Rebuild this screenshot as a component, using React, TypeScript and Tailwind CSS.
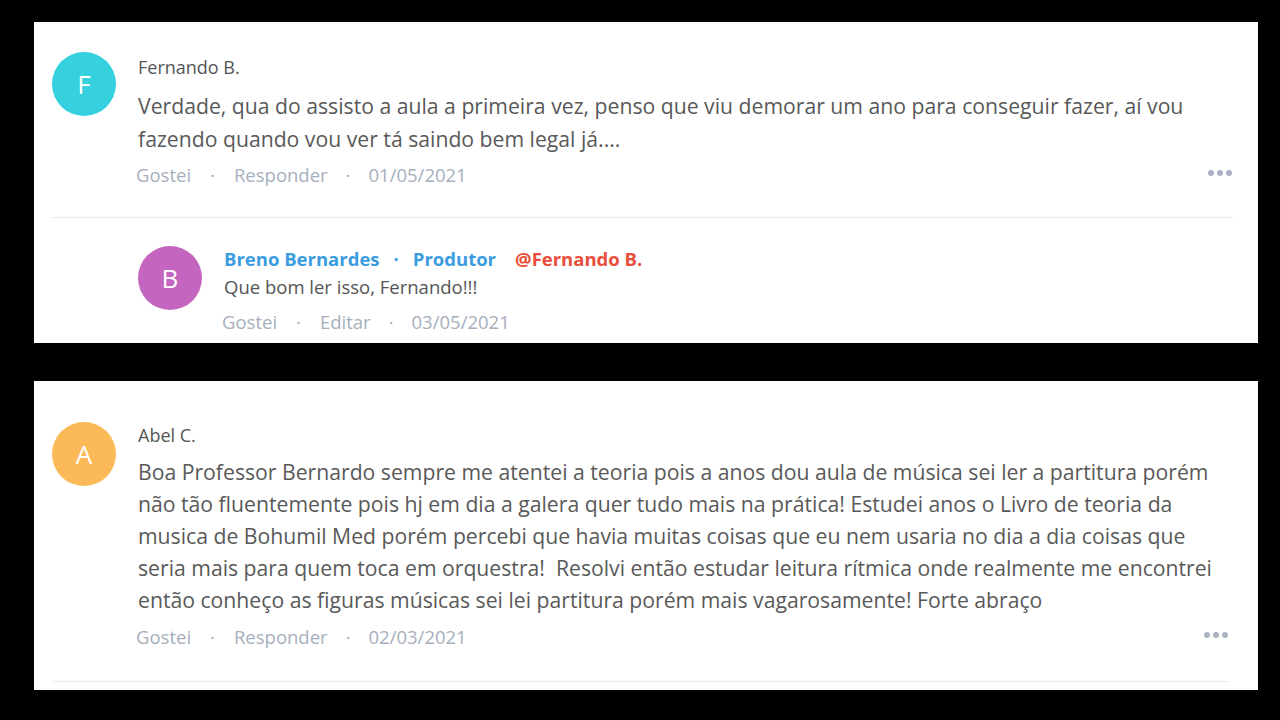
const font = { fontFamily: '"Open Sans", "Noto Sans", sans-serif' };

function Avatar({ letter, color }: { letter: string; color: string }) {
  return (
    <div
      className={`flex h-16 w-16 flex-shrink-0 items-center justify-center rounded-full text-[26px] text-white ${color}`}
    >
      {letter}
    </div>
  );
}

function Dots() {
  return (
    <div className="flex gap-[3px]">
      <span className="h-[6px] w-[6px] rounded-full bg-[#a9b2c0]" />
      <span className="h-[6px] w-[6px] rounded-full bg-[#a9b2c0]" />
      <span className="h-[6px] w-[6px] rounded-full bg-[#a9b2c0]" />
    </div>
  );
}

function Actions({ second, date }: { second: string; date: string }) {
  return (
    <div className="flex items-center text-[18.5px] leading-6 text-[#a6afbd]">
      <span>Gostei</span>
      <span className="mx-[19px]">·</span>
      <span>{second}</span>
      <span className="mx-[18px]">·</span>
      <span>{date}</span>
    </div>
  );
}

export default function App() {
  return (
    <div className="h-[720px] w-[1280px] overflow-hidden bg-black pt-[22px]" style={font}>
      {/* first thread */}
      <div className="ml-[34px] h-[321px] w-[1224px] overflow-hidden bg-white">
        <div className="flex pl-[18px] pt-[30px]">
          <Avatar letter="F" color="bg-[#36d1de]" />
          <div className="ml-[22px] w-[1082px] pt-[3px]">
            <div className="text-[18px] leading-6 text-[#555]">Fernando B.</div>
            <p className="mt-[10px] text-[21.2px] leading-[33px] text-[#595959]">
              Verdade, qua do assisto a aula a primeira vez, penso que viu demorar um ano para conseguir fazer, aí vou fazendo quando vou ver tá saindo bem legal já....
            </p>
            <div className="mt-[8px] flex items-center justify-between">
              <div className="-ml-[2px]">
                <Actions second="Responder" date="01/05/2021" />
              </div>
              <div className="-mr-[12px] -mt-[4px]">
                <Dots />
              </div>
            </div>
          </div>
        </div>
        <div className="ml-4 mr-[25px] mt-[30px] h-px bg-[#ececec]" />

        {/* reply */}
        <div className="flex pl-[104px] pt-[28px]">
          <Avatar letter="B" color="bg-[#c466c0]" />
          <div className="ml-[22px] mt-[1px]">
            <div className="flex items-center text-[18.5px] font-bold leading-6">
              <span className="text-[#3b9de0]">Breno Bernardes</span>
              <span className="mx-[14px] text-[#3b9de0]">·</span>
              <span className="text-[#3b9de0]">Produtor</span>
              <span className="ml-[19px] text-[#e84e3b]">@Fernando B.</span>
            </div>
            <div className="mt-[4px] text-[18.5px] leading-6 text-[#555]">Que bom ler isso, Fernando!!!</div>
            <div className="-ml-[2px] mt-[11px]">
              <Actions second="Editar" date="03/05/2021" />
            </div>
          </div>
        </div>
      </div>

      {/* second thread */}
      <div className="ml-[34px] mt-[38px] h-[309px] w-[1224px] overflow-hidden bg-white">
        <div className="flex pl-[18px] pt-[41px]">
          <Avatar letter="A" color="bg-[#fbb957]" />
          <div className="ml-[22px] w-[1082px] pt-[1px]">
            <div className="text-[18px] leading-6 text-[#555]">Abel C.</div>
            <p className="mt-[9px] text-[21.2px] leading-[32px] text-[#595959]">
              Boa Professor Bernardo sempre me atentei a teoria pois a anos dou aula de música sei ler a partitura porém não tão fluentemente pois hj em dia a galera quer tudo mais na prática! Estudei anos o Livro de teoria da musica de Bohumil Med porém percebi que havia muitas coisas que eu nem usaria no dia a dia coisas que seria mais para quem toca em orquestra!&nbsp; Resolvi então estudar leitura rítmica onde realmente me encontrei então conheço as figuras músicas sei lei partitura porém mais vagarosamente! Forte abraço
            </p>
            <div className="mt-[9px] flex items-center justify-between">
              <div className="-ml-[2px]">
                <Actions second="Responder" date="02/03/2021" />
              </div>
              <div className="-mr-[8px] -mt-[4px]">
                <Dots />
              </div>
            </div>
          </div>
        </div>
        <div className="ml-[18px] mr-[28px] mt-[32px] h-px bg-[#ececec]" />
      </div>
    </div>
  );
}
